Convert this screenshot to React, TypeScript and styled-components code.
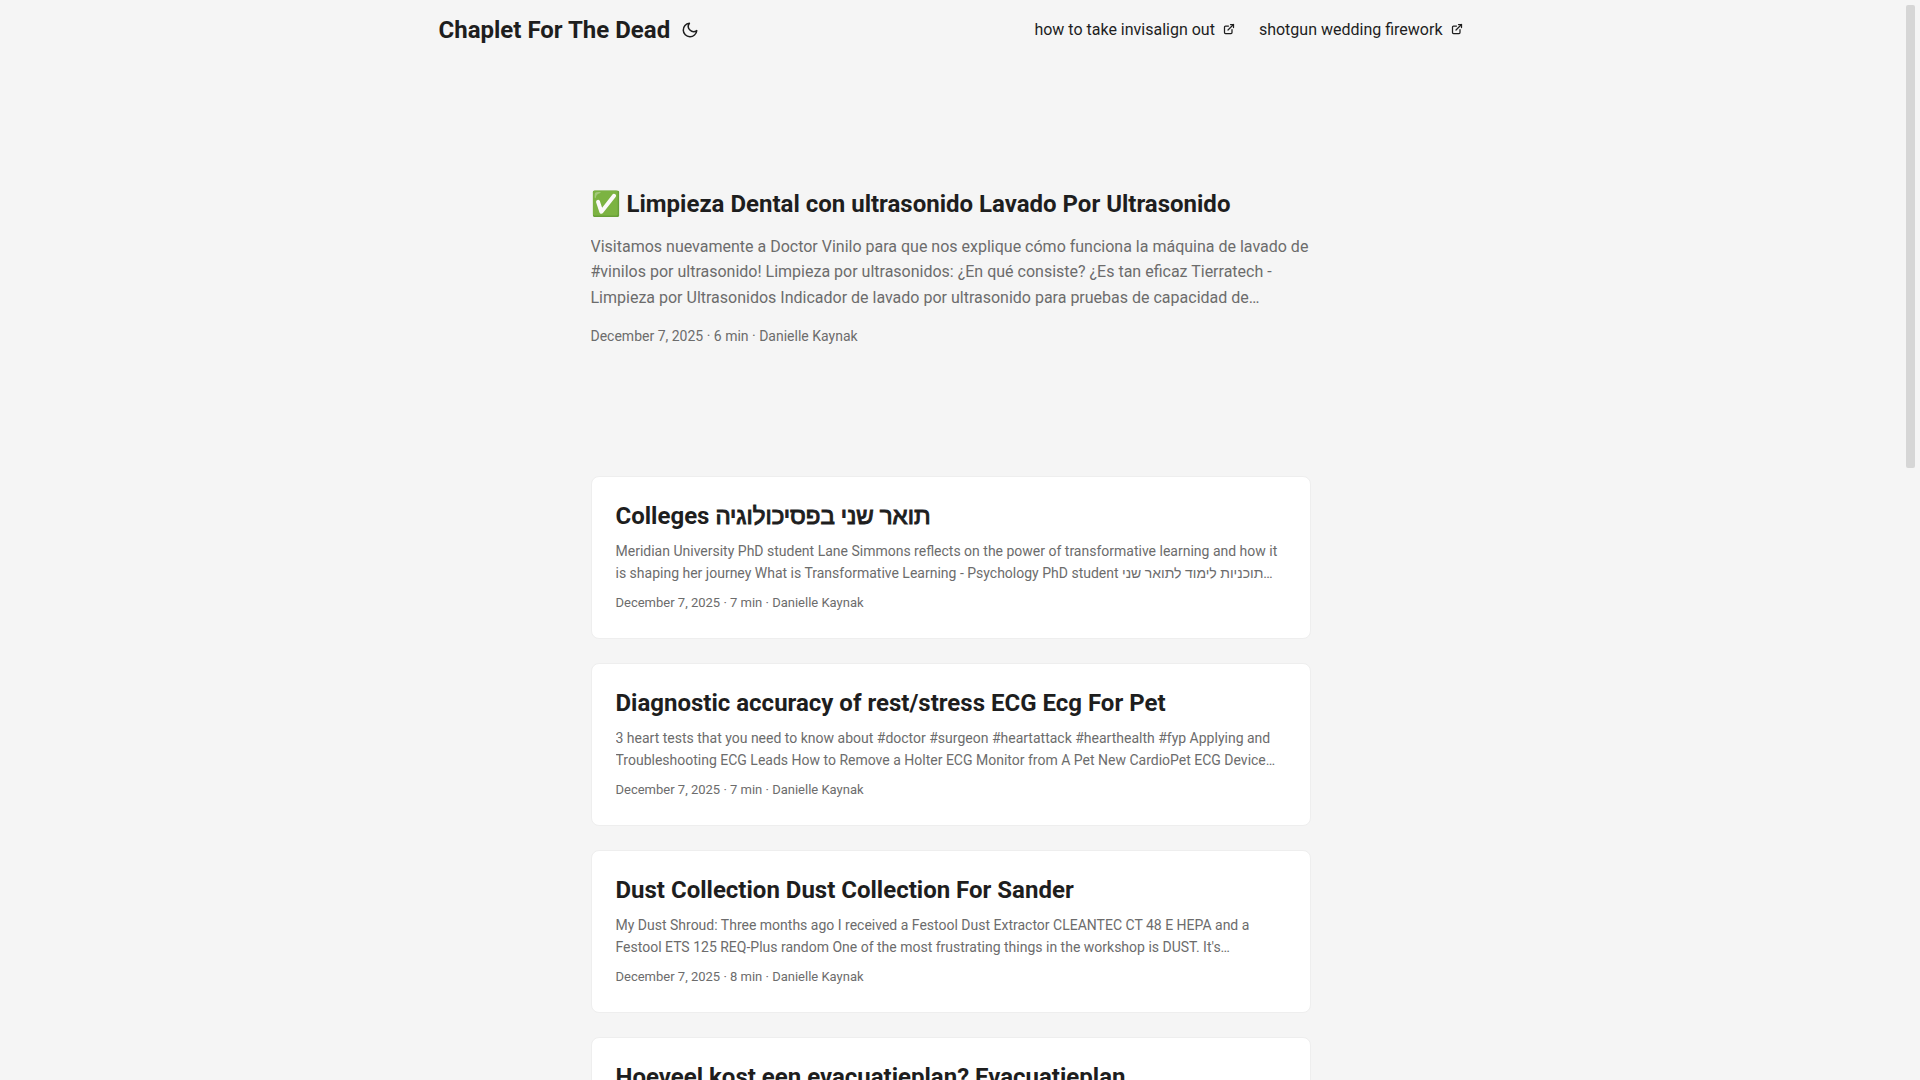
import React from "react";
import styled, { createGlobalStyle } from "styled-components";

const GlobalStyle = createGlobalStyle`
  *, *::before, *::after { box-sizing: border-box; }
  html { overflow: hidden; }
  body {
    margin: 0;
    background: #f5f5f5;
    color: #1e1e1e;
    font-family: Roboto, "Liberation Sans", sans-serif;
    font-size: 18px;
    line-height: 1.6;
    overflow-wrap: break-word;
  }
  h1, h2, p, ul { margin: 0; padding: 0; }
  a { color: inherit; text-decoration: none; }
`;

const Page = styled.div`
  display: grid;
  grid-template-columns: minmax(0, 1fr) 19px;
  height: 100vh;
  overflow: hidden;
`;

const Content = styled.div`
  min-width: 0;
`;

const ScrollGutter = styled.div`
  padding: 5px;
`;

const ScrollThumb = styled.div`
  height: 42.9vh;
  border-radius: 2px;
  background: #d6d6d6;
`;

const Nav = styled.nav`
  display: flex;
  justify-content: space-between;
  max-width: 1072px;
  margin: 0 auto;
  line-height: 60px;
`;

const Logo = styled.div`
  display: flex;
  margin: 0 24px;
  font-size: 24px;
  font-weight: 700;
`;

const ThemeToggle = styled.button`
  display: flex;
  align-items: center;
  margin: 0 4px;
  padding: 0 7px;
  border: 0;
  background: transparent;
  color: inherit;
  cursor: pointer;
`;

const Menu = styled.ul`
  display: flex;
  gap: 24px;
  margin: 0 24px;
  font-size: 16px;
  list-style: none;
`;

const ExternalIcon = styled.svg`
  width: 12px;
  height: 12px;
  margin-left: 8px;
`;

const Main = styled.main`
  max-width: 768px;
  margin: 0 auto;
  padding: 24px;
`;

const Intro = styled.article`
  display: flex;
  flex-direction: column;
  justify-content: center;
  min-height: 320px;
  margin: 24px 0 48px;
`;

const Title = styled.h2`
  font-size: 24px;
  line-height: 31px;
`;

const HebrewTitle = styled.span`
  font-weight: 400;
  -webkit-text-stroke: 1px currentColor;
`;

const Summary = styled.p<{ $large?: boolean }>`
  display: -webkit-box;
  overflow: hidden;
  margin: ${(p) => (p.$large ? "14px 0 15px" : "8px 0")};
  color: #6c6c6c;
  font-size: ${(p) => (p.$large ? 16 : 14)}px;
  line-height: ${(p) => (p.$large ? "1.6" : "22px")};
  -webkit-box-orient: vertical;
  -webkit-line-clamp: ${(p) => (p.$large ? 3 : 2)};
`;

const Meta = styled.footer<{ $large?: boolean }>`
  color: #6c6c6c;
  font-size: ${(p) => (p.$large ? 14 : 13)}px;
  line-height: 22px;
`;

const Card = styled.article`
  margin-bottom: 24px;
  padding: 24px;
  border: 1px solid #eeeeee;
  border-radius: 8px;
  background: #ffffff;
`;

const links = ["how to take invisalign out", "shotgun wedding firework"];

const posts = [
  {
    title: "Colleges ",
    hebrew: "תואר שני בפסיכולוגיה",
    summary:
      "Meridian University PhD student Lane Simmons reflects on the power of transformative learning and how it is shaping her journey What is Transformative Learning - Psychology PhD student תוכניות לימוד לתואר שני…",
    minutes: 7,
  },
  {
    title: "Diagnostic accuracy of rest/stress ECG Ecg For Pet",
    summary:
      "3 heart tests that you need to know about #doctor #surgeon #heartattack #hearthealth #fyp Applying and Troubleshooting ECG Leads How to Remove a Holter ECG Monitor from A Pet New CardioPet ECG Device…",
    minutes: 7,
  },
  {
    title: "Dust Collection Dust Collection For Sander",
    summary:
      "My Dust Shroud: Three months ago I received a Festool Dust Extractor CLEANTEC CT 48 E HEPA and a Festool ETS 125 REQ-Plus random One of the most frustrating things in the workshop is DUST. It's…",
    minutes: 8,
  },
  { title: "Hoeveel kost een evacuatieplan? Evacuatieplan", summary: "", minutes: 7 },
];

export default function App() {
  return (
    <Page>
      <GlobalStyle />
      <Content>
        <header>
          <Nav>
            <Logo>
              <a href="#home">Chaplet For The Dead</a>
              <ThemeToggle aria-label="Toggle theme">
                <svg width="18" height="18" viewBox="0 0 24 24" fill="none" stroke="currentColor" strokeWidth="2" strokeLinecap="round" strokeLinejoin="round">
                  <path d="M21 12.79A9 9 0 1 1 11.21 3 7 7 0 0 0 21 12.79z" />
                </svg>
              </ThemeToggle>
            </Logo>
            <Menu>
              {links.map((label) => (
                <li key={label}>
                  <a href="#link">
                    {label}
                    <ExternalIcon viewBox="0 0 24 24" fill="none" stroke="currentColor" strokeWidth="2.5" strokeLinecap="round" strokeLinejoin="round">
                      <path d="M18 13v6a2 2 0 0 1-2 2H5a2 2 0 0 1-2-2V8a2 2 0 0 1 2-2h6" />
                      <path d="M15 3h6v6" />
                      <path d="M10 14L21 3" />
                    </ExternalIcon>
                  </a>
                </li>
              ))}
            </Menu>
          </Nav>
        </header>
        <Main>
          <Intro>
            <Title>✅ Limpieza Dental con ultrasonido Lavado Por Ultrasonido</Title>
            <Summary $large>
              Visitamos nuevamente a Doctor Vinilo para que nos explique cómo funciona la máquina de lavado de #vinilos por ultrasonido! Limpieza por ultrasonidos: ¿En qué consiste? ¿Es tan eficaz Tierratech - Limpieza por Ultrasonidos Indicador de lavado por ultrasonido para pruebas de capacidad de…
            </Summary>
            <Meta $large>December 7, 2025 · 6 min · Danielle Kaynak</Meta>
          </Intro>
          {posts.map((post) => (
            <Card key={post.title}>
              <Title>
                {post.title}
                {post.hebrew && <HebrewTitle lang="he">{post.hebrew}</HebrewTitle>}
              </Title>
              <Summary>{post.summary}</Summary>
              <Meta>December 7, 2025 · {post.minutes} min · Danielle Kaynak</Meta>
            </Card>
          ))}
        </Main>
      </Content>
      <ScrollGutter aria-hidden="true">
        <ScrollThumb />
      </ScrollGutter>
    </Page>
  );
}
